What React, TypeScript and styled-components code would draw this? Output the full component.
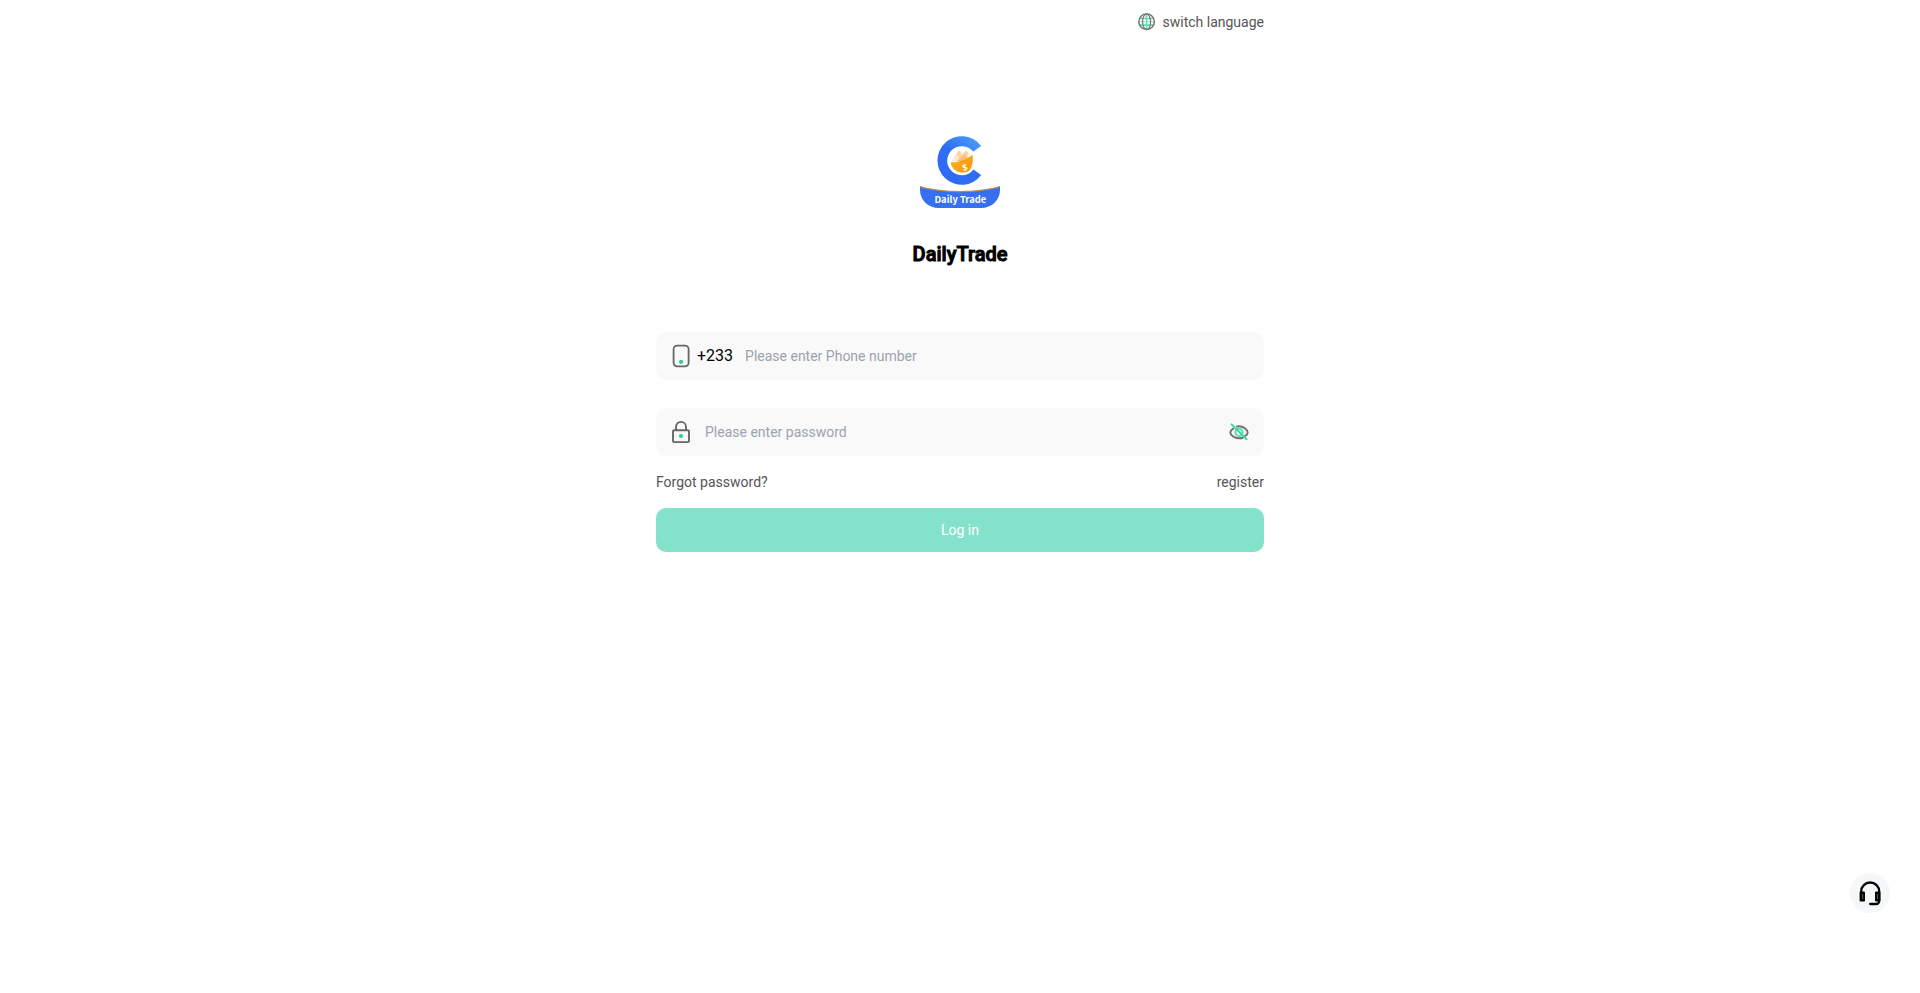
import React, { useState } from "react";
import styled, { createGlobalStyle } from "styled-components";

const GlobalStyle = createGlobalStyle`
  *, *::before, *::after { box-sizing: border-box; }
  body {
    margin: 0;
    background: #fff;
    color: #000;
    font-family: Roboto, "Liberation Sans", sans-serif;
    font-size: 14px;
    line-height: 20px;
  }
  button, input { font: inherit; }
`;

const Page = styled.main`
  max-width: 640px;
  min-height: 100vh;
  margin: 0 auto;
  padding: 0 16px;
`;

const TopBar = styled.header`
  display: flex;
  justify-content: flex-end;
  height: 44px;
  align-items: center;
`;

const PlainButton = styled.button`
  display: flex;
  align-items: center;
  padding: 0;
  border: 0;
  background: none;
  color: #555;
  cursor: pointer;
`;

const LanguageButton = styled(PlainButton)`
  gap: 7px;
`;

const Brand = styled.section`
  display: flex;
  flex-direction: column;
  align-items: center;
  gap: 28px;
  padding: 88px 0 64px;
`;

const BrandName = styled.h1`
  margin: 0;
  font-size: 20px;
  line-height: 28px;
  font-weight: 500;
  -webkit-text-stroke: 1px #000;
`;

const Form = styled.form`
  display: flex;
  flex-direction: column;
`;

const Field = styled.div`
  display: flex;
  align-items: center;
  height: 48px;
  padding: 0 15px;
  border-radius: 10px;
  background: #f9f9f9;

  & + & { margin-top: 28px; }
`;

const DialCode = styled.span`
  margin-left: 4px;
  font-size: 16px;
`;

const TextInput = styled.input`
  flex: 1;
  min-width: 0;
  height: 100%;
  margin: 0 12px;
  padding: 0;
  border: 0;
  outline: 0;
  background: none;
  color: #000;

  &::placeholder { color: #9ca3af; opacity: 1; }
`;

const LinkRow = styled.nav`
  display: flex;
  justify-content: space-between;
  padding: 16px 0;
`;

const TextLink = styled.a`
  color: #555;
  text-decoration: none;
`;

const SubmitButton = styled.button`
  height: 44px;
  border: 0;
  border-radius: 10px;
  background: #84e2cb;
  color: #fff;
  cursor: pointer;
`;

const SupportButton = styled.button`
  position: fixed;
  right: 30px;
  bottom: 80px;
  display: flex;
  align-items: center;
  justify-content: center;
  width: 40px;
  height: 40px;
  padding: 0;
  border: 0;
  border-radius: 50%;
  background: #f5f8f8;
  cursor: pointer;
`;

const GlobeIcon = () => (
  <svg width="18" height="18" viewBox="0 0 18 18" fill="none" aria-hidden="true">
    <path d="M2 5.5h14M2 12.2h14M8.6 1v15" stroke="#62dfbb" strokeWidth="1.7" />
    <path d="M1 8.8h16" stroke="#8edec7" strokeWidth="1" />
    <circle cx="8.6" cy="8.7" r="7.8" stroke="#707070" strokeWidth="1.4" />
    <ellipse cx="8.6" cy="8.7" rx="4" ry="7.8" stroke="#777" strokeWidth="1.2" />
  </svg>
);

const PhoneIcon = () => (
  <svg width="22" height="24" viewBox="0 0 22 24" fill="none" aria-hidden="true">
    <rect x="2.6" y="1.7" width="15" height="20.6" rx="3.5" stroke="#666" strokeWidth="1.8" />
    <circle cx="10.1" cy="17.8" r="2.1" fill="#25cf98" />
  </svg>
);

const LockIcon = () => (
  <svg width="22" height="24" viewBox="0 0 22 24" fill="none" aria-hidden="true">
    <rect x="2" y="10.3" width="16" height="11.8" rx="1.2" stroke="#666" strokeWidth="1.9" />
    <path d="M5 10V6.9a5 5 0 0 1 10 0V10" stroke="#666" strokeWidth="1.9" />
    <circle cx="10" cy="16" r="2.1" fill="#25cf98" />
  </svg>
);

const EyeOffIcon = () => (
  <svg width="20" height="20" viewBox="0 0 20 20" fill="none" aria-hidden="true">
    <path
      d="M4.2 6.6C2.4 7.8 1.3 9.4 1.3 10.4c0 2.5 4 5.9 8.7 5.9 1.4 0 2.8-.3 4-.8M8 4.5c.7-.1 1.3-.2 2-.2 4.8 0 8.7 3.7 8.7 6.1 0 1.1-1 2.5-2.5 3.6"
      stroke="#707070"
      strokeWidth="1.9"
      strokeLinecap="round"
    />
    <circle cx="10" cy="10.3" r="3.6" stroke="#55ddb5" strokeWidth="2" />
    <path d="M2.6 2.4 17.6 17.2" stroke="#35dba5" strokeWidth="2" strokeLinecap="round" />
  </svg>
);

const HeadsetIcon = () => (
  <svg width="24" height="26" viewBox="0 0 24 26" fill="none" aria-hidden="true">
    <path d="M3.2 14v-2.5a9 9 0 0 1 18 0V21a3 3 0 0 1-3 3h-6" stroke="#050505" strokeWidth="2.3" strokeLinecap="round" />
    <rect x="1.6" y="11.6" width="5.4" height="10" rx="1" fill="#050505" />
    <rect x="17" y="11.6" width="5.4" height="10" rx="1" fill="#050505" />
    <path d="M4.7 14v5M19.5 14v5" stroke="#555" strokeWidth="1.1" />
  </svg>
);

const Logo = () => (
  <svg width="80" height="80" viewBox="0 0 80 80" role="img" aria-label="Daily Trade">
    <defs>
      <linearGradient id="ring" x1="24" y1="48" x2="58" y2="8" gradientUnits="userSpaceOnUse">
        <stop stopColor="#3169f3" />
        <stop offset=".5" stopColor="#2f6df5" />
        <stop offset="1" stopColor="#4b9cfa" />
      </linearGradient>
      <linearGradient id="wallet" x1="32" y1="24" x2="50" y2="42" gradientUnits="userSpaceOnUse">
        <stop stopColor="#f9b12d" />
        <stop offset="1" stopColor="#fb9600" />
      </linearGradient>
    </defs>
    <path
      d="M61.2 13.9A24.3 24.3 0 1 0 61.2 43.1L53.4 37.6A14.6 14.6 0 1 1 53.2 19.6z"
      fill="url(#ring)"
    />
    <path d="M31.8 29.2 38.6 18.4 41.6 20.2 39 28zM35 28.5 46.2 18.6 49.4 22.2 43 27z" fill="#fbd3a3" />
    <path d="m31.8 29.2 4.5-7.2 3.2 4.4-3.5 2.7z" fill="#fde6cc" />
    <path d="m36.5 29.2 8-6.8 3.6 3.2-6 3.4z" fill="#f9bd7c" />
    <path d="M30.6 30.3c7 .2 15-2.4 22-7.6.6 6.2 0 12.3-3.6 16.4-6.6 3.4-16.8 1.2-18.4-8.8z" fill="url(#wallet)" />
    <text x="42.2" y="38.6" fill="#fff" fontFamily="Open Sans, sans-serif" fontSize="9" fontWeight="700" transform="rotate(-14 45 35)">$</text>
    <path d="M0 54.4C23 61 57 61 80 54.4V58C80 68 72 76 61 76H19C8 76 0 68 0 58z" fill="#376ff1" />
    <path d="M0 54C23 60.6 57 60.6 80 54v1.2C57 61.8 23 61.8 0 55.2z" fill="#b98956" />
    <text x="40.3" y="71" textAnchor="middle" fill="#fff" fontFamily="Noto Sans CJK SC, sans-serif" fontSize="9.4" fontWeight="700">Daily Trade</text>
  </svg>
);

export default function App() {
  const [visible, setVisible] = useState(false);

  return (
    <>
      <GlobalStyle />
      <Page>
        <TopBar>
          <LanguageButton type="button">
            <GlobeIcon />
            switch language
          </LanguageButton>
        </TopBar>
        <Brand>
          <Logo />
          <BrandName>DailyTrade</BrandName>
        </Brand>
        <Form onSubmit={(event: React.FormEvent) => event.preventDefault()}>
          <Field>
            <PhoneIcon />
            <DialCode>+233</DialCode>
            <TextInput type="tel" aria-label="Phone number" placeholder="Please enter Phone number" />
          </Field>
          <Field>
            <LockIcon />
            <TextInput
              type={visible ? "text" : "password"}
              aria-label="Password"
              placeholder="Please enter password"
            />
            <PlainButton type="button" aria-label="Show password" onClick={() => setVisible(!visible)}>
              <EyeOffIcon />
            </PlainButton>
          </Field>
          <LinkRow>
            <TextLink href="#forgot">Forgot password?</TextLink>
            <TextLink href="#register">register</TextLink>
          </LinkRow>
          <SubmitButton type="submit">Log in</SubmitButton>
        </Form>
      </Page>
      <SupportButton type="button" aria-label="Customer support">
        <HeadsetIcon />
      </SupportButton>
    </>
  );
}
